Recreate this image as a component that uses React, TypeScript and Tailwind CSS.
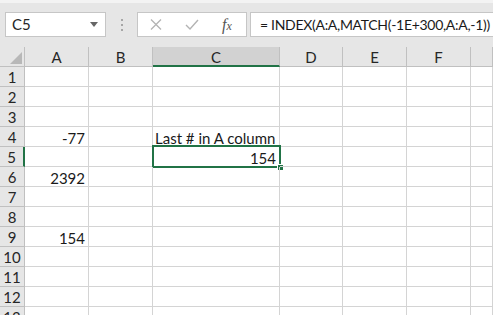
const cols = ["A", "B", "C", "D", "E", "F", ""];
const widths = ["w-[64px]", "w-[64px]", "w-[127px]", "w-[63px]", "w-[64px]", "w-[64px]", "flex-1"];

const data: Record<number, Record<string, string>> = {
  4: { A: "-77", C: "Last # in A column" },
  5: { C: "154" },
  6: { A: "2392" },
  9: { A: "154" },
};

const rows = Array.from({ length: 13 }, (_, i) => i + 1);

function Cell({ row, col, w }: { row: number; col: string; w: string }) {
  const value = data[row]?.[col];
  const isText = value !== undefined && isNaN(Number(value));
  const selected = row === 5 && col === "C";
  return (
    <div
      className={`relative h-[20px] shrink-0 border-b border-r border-[#d4d4d4] ${w} ${
        isText ? "text-left pl-[2px]" : "text-right pr-[3px]"
      } overflow-visible whitespace-nowrap text-[15px] leading-[22px] text-[#1a1a1a]`}
    >
      {value}
      {selected && (
        <>
          <div className="pointer-events-none absolute -left-[1px] -top-[2px] right-[-2px] bottom-[-2px] border-2 border-[#217346]" />
          <div className="absolute -bottom-[5px] -right-[5px] h-[7px] w-[7px] border border-white bg-[#217346]" />
        </>
      )}
    </div>
  );
}

export default function App() {
  return (
    <div className="h-[315px] w-[493px] overflow-hidden bg-white font-['Lato','Open_Sans',sans-serif]">
      {/* formula bar */}
      <div className="flex h-[47px] items-center border-t-[3px] border-[#f3f3f3] bg-[#e6e6e6] pb-[1px]">
        <div className="ml-[5px] flex h-[25px] w-[101px] shrink-0 items-center justify-between border border-[#c6c6c6] bg-white pl-[6px] pr-[7px] text-[15px] text-[#262626]">
          <span>C5</span>
          <svg width="8" height="5" viewBox="0 0 8 5">
            <path d="M0 0 H8 L4 5 Z" fill="#666" />
          </svg>
        </div>
        <div className="flex w-[31px] shrink-0 flex-col items-center gap-[3px]">
          <span className="h-[2px] w-[2px] bg-[#a6a6a6]" />
          <span className="h-[2px] w-[2px] bg-[#a6a6a6]" />
          <span className="h-[2px] w-[2px] bg-[#a6a6a6]" />
        </div>
        <div className="flex h-[25px] w-[110px] shrink-0 items-center border border-[#c6c6c6] bg-white pl-[12px]">
          <svg width="12" height="11" viewBox="0 0 12 11">
            <path d="M1 0.5 L11 10.5 M11 0.5 L1 10.5" stroke="#b3b3b3" strokeWidth="1.3" />
          </svg>
          <svg className="ml-[23px]" width="14" height="11" viewBox="0 0 14 11">
            <path d="M1 6 L5 10 L13 1" stroke="#b3b3b3" strokeWidth="1.4" fill="none" />
          </svg>
          <span className="ml-[23px] font-['Liberation_Serif',serif] text-[16px] italic text-[#555]">
            f<span className="text-[12px]">x</span>
          </span>
        </div>
        <div className="ml-[3px] flex h-[25px] min-w-0 flex-1 items-center overflow-hidden border-y border-l border-[#c6c6c6] bg-white pl-[9px] text-[14px] tracking-[-0.3px] whitespace-nowrap text-[#1a1a1a]">
          = INDEX(A:A,MATCH(-1E+300,A:A,-1))
        </div>
      </div>

      {/* column headers */}
      <div className="flex h-[20px] bg-[#e6e6e6]">
        <div className="relative h-[20px] w-[25px] shrink-0 border-b border-r border-[#c0c0c0]">
          <svg className="absolute bottom-[2px] right-[2px]" width="12" height="12" viewBox="0 0 12 12">
            <path d="M12 0 V12 H0 Z" fill="#b8b8b8" />
          </svg>
        </div>
        {cols.map((c, i) => (
          <div
            key={i}
            className={`h-[20px] shrink-0 text-center text-[15px] leading-[20px] text-[#262626] ${widths[i]} ${
              c === "C"
                ? "border-b-2 border-r border-[#217346] border-r-[#c0c0c0] bg-[#d2d2d2]"
                : "border-b border-r border-[#c0c0c0]"
            }`}
          >
            {c}
          </div>
        ))}
      </div>

      {/* rows */}
      {rows.map((r) => (
        <div key={r} className="flex">
          <div
            className={`h-[20px] w-[25px] shrink-0 border-b border-[#c0c0c0] bg-[#e6e6e6] text-center text-[15px] leading-[21px] text-[#262626] ${
              r === 5 ? "border-r-2 border-r-[#217346] bg-[#d2d2d2]" : "border-r"
            }`}
          >
            {r}
          </div>
          {cols.map((c, i) => (
            <Cell key={i} row={r} col={c} w={widths[i]} />
          ))}
        </div>
      ))}
    </div>
  );
}
